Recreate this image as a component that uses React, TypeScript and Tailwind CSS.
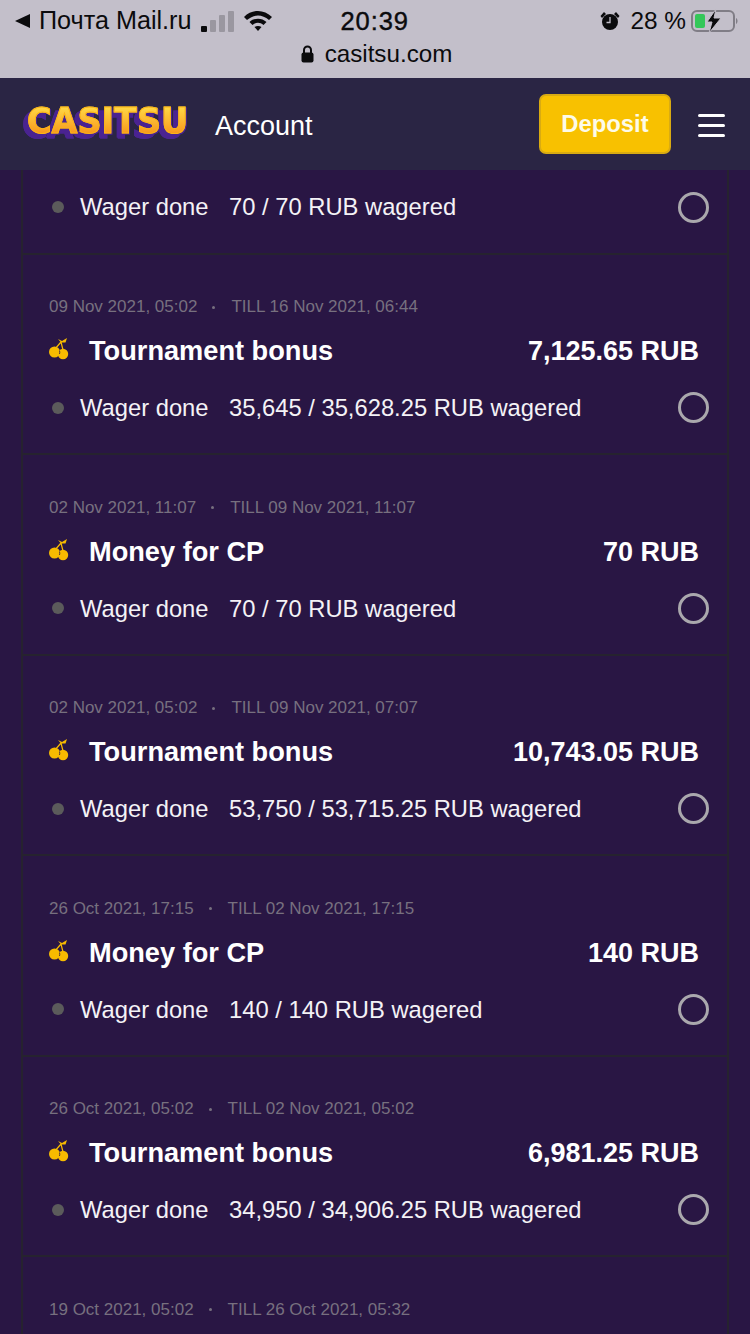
import React from 'react';

type Bonus = {
  from: string;
  till: string;
  title: string;
  amount: string;
  wager: string;
};

const bonuses: Bonus[] = [
  { from: '09 Nov 2021, 05:02', till: 'TILL 16 Nov 2021, 06:44', title: 'Tournament bonus', amount: '7,125.65 RUB', wager: '35,645 / 35,628.25 RUB wagered' },
  { from: '02 Nov 2021, 11:07', till: 'TILL 09 Nov 2021, 11:07', title: 'Money for CP', amount: '70 RUB', wager: '70 / 70 RUB wagered' },
  { from: '02 Nov 2021, 05:02', till: 'TILL 09 Nov 2021, 07:07', title: 'Tournament bonus', amount: '10,743.05 RUB', wager: '53,750 / 53,715.25 RUB wagered' },
  { from: '26 Oct 2021, 17:15', till: 'TILL 02 Nov 2021, 17:15', title: 'Money for CP', amount: '140 RUB', wager: '140 / 140 RUB wagered' },
  { from: '26 Oct 2021, 05:02', till: 'TILL 02 Nov 2021, 05:02', title: 'Tournament bonus', amount: '6,981.25 RUB', wager: '34,950 / 34,906.25 RUB wagered' },
];

function Cherry() {
  return (
    <svg width="20" height="22" viewBox="0 0 20 22" className="-mt-[4px] shrink-0">
      <path d="M9 1 L13 3 L18 0 L16.500 4.500 L12 4.500 Z" fill="#f7bb00" />
      <path d="M12 4 L6 11 M12 4 L14 12" stroke="#f7bb00" strokeWidth="1.200" fill="none" />
      <circle cx="5.500" cy="14" r="5.500" fill="#f7bb00" />
      <circle cx="14" cy="16" r="5.200" fill="#f7bb00" />
      <path d="M10.500 12.500 A5.500 5.500 0 0 1 10.500 16" stroke="#291644" strokeWidth="0.800" fill="none" />
    </svg>
  );
}

function WagerRow({ wager }: { wager: string }) {
  return (
    <div className="flex h-[30px] items-center pl-[29px] pr-[18px]">
      <span className="h-[12px] w-[12px] rounded-full bg-[#5b5b5b]" />
      <span className="ml-[16px] text-[23.75px] text-[#f4f2f6]">Wager done</span>
      <span className="ml-[20.5px] text-[23.75px] text-[#f4f2f6]">{wager}</span>
      <span className="ml-auto h-[31px] w-[31px] rounded-full border-[3px] border-[#aaa8ad]" />
    </div>
  );
}

function DateRow({ from, till }: { from: string; till: string }) {
  return (
    <div className="flex h-[20px] items-center pl-[26px] text-[17px] text-[#77707f]">
      <span>{from}</span>
      <span className="ml-[15px] mr-[16px] h-[3px] w-[3px] rounded-full bg-[#77707f]" />
      <span>{till}</span>
    </div>
  );
}

function BonusCard({ bonus }: { bonus: Bonus }) {
  return (
    <div className="h-[200.5px] border-t-2 border-[#26232f] pt-[42.5px]">
      <DateRow from={bonus.from} till={bonus.till} />
      <div className="mt-[16.3px] flex h-[36px] items-center pl-[26px] pr-[28px] text-white">
        <Cherry />
        <span className="ml-[20px] text-[27.2px] leading-[32px] font-bold">{bonus.title}</span>
        <span className="ml-auto text-[27px] leading-[32px] font-bold">{bonus.amount}</span>
      </div>
      <div className="mt-[23.7px]">
        <WagerRow wager={bonus.wager} />
      </div>
    </div>
  );
}

function StatusBar() {
  return (
    <div className="h-[78px] shrink-0 bg-[#c3bfca] text-[#0b0b0d]">
      <div className="flex h-[42px] items-center pl-[14px] pr-[11px]">
        <svg width="17" height="16" viewBox="0 0 17 16"><path d="M16 1 L16 15 L1 8 Z" fill="#0b0b0d" /></svg>
        <span className="ml-[8px] text-[25.2px]">Почта Mail.ru</span>
        <div className="ml-[9px] flex items-end gap-[3px]">
          <span className="h-[6px] w-[6px] rounded-[1px] bg-[#0b0b0d]" />
          <span className="h-[12px] w-[6px] rounded-[1px] bg-[#9a97a0]" />
          <span className="h-[17px] w-[6px] rounded-[1px] bg-[#9a97a0]" />
          <span className="h-[21px] w-[6px] rounded-[1px] bg-[#9a97a0]" />
        </div>
        <svg className="ml-[9px]" width="30" height="22" viewBox="0 0 30 22">
          <path d="M1 7 C9 -1 21 -1 29 7 L26 10 C19 4 11 4 4 10 Z" fill="#0b0b0d" />
          <path d="M6.500 12 C11 7.500 19 7.500 23.500 12 L20.500 15 C17 12 13 12 9.500 15 Z" fill="#0b0b0d" />
          <path d="M11.500 17 C13.500 15.500 16.500 15.500 18.500 17 L15 21 Z" fill="#0b0b0d" />
        </svg>
        <span className="ml-[68px] text-[25.5px] tracking-[0.9px] [-webkit-text-stroke:0.4px_#0b0b0d]">20:39</span>
        <svg className="ml-auto" width="20" height="20" viewBox="0 0 20 20">
          <circle cx="10" cy="11" r="8" fill="#0b0b0d" />
          <path d="M0.500 5 L4 1 L6 3 L2 7 Z M19.500 5 L16 1 L14 3 L18 7 Z" fill="#0b0b0d" />
          <path d="M10 6 V11.500 H6.500" stroke="#c3bfca" strokeWidth="1.300" fill="none" />
        </svg>
        <span className="ml-[10px] text-[24.4px]">28 %</span>
        <svg className="ml-[5px]" width="48" height="26" viewBox="0 0 48 26">
          <rect x="1" y="3" width="42" height="20" rx="5" fill="none" stroke="#807d86" strokeWidth="2" />
          <rect x="4" y="6" width="10" height="14" rx="2" fill="#34c759" />
          <path d="M45 10 C47 11 47 15 45 16 Z" fill="#807d86" />
          <path d="M16 14 L25 1 L23 10 L30 10 L18 25 L21 14 Z" fill="#0b0b0d" stroke="#c3bfca" strokeWidth="1" />
        </svg>
      </div>
      <div className="flex h-[24px] items-center justify-center gap-[11px] pl-[3px]">
        <svg width="13" height="18" viewBox="0 0 13 18">
          <path d="M3 8 V5 A3.500 3.500 0 0 1 10 5 V8" stroke="#0b0b0d" strokeWidth="2" fill="none" />
          <rect x="0.500" y="7.500" width="12" height="10" rx="2" fill="#0b0b0d" />
        </svg>
        <span className="text-[24.2px]">casitsu.com</span>
      </div>
    </div>
  );
}

function Logo() {
  return (
    <div className="-mt-[6px] w-[164px] pl-[7px] [filter:drop-shadow(-5px_4px_0_#4a2391)_drop-shadow(1px_1px_0_#4a2391)]">
      <span className="inline-block origin-left scale-x-[0.93] whitespace-nowrap bg-linear-to-b from-[#ffe24a] to-[#f58a10] bg-clip-text text-[36px] leading-none font-bold text-transparent [font-family:'DejaVu_Sans',sans-serif] [-webkit-text-stroke:1px_#fbb416]">
        CASITSU
      </span>
    </div>
  );
}

function Header() {
  return (
    <div className="flex h-[92px] shrink-0 items-center bg-[#2a2544] pl-[20px] pr-[25px]">
      <Logo />
      <span className="mt-[4px] ml-[31px] text-[27px] text-white">Account</span>
      <button className="ml-auto flex h-[60px] w-[132px] items-center justify-center rounded-[7px] border-2 border-[#d9ab12] bg-[#f8c100] text-[23.8px] font-bold text-[#fdfbe8]">
        Deposit
      </button>
      <div className="mt-[3px] ml-[27px] flex w-[27px] flex-col gap-[7px]">
        <span className="h-[3px] rounded-full bg-white" />
        <span className="h-[3px] rounded-full bg-white" />
        <span className="h-[3px] rounded-full bg-white" />
      </div>
    </div>
  );
}

export default function App() {
  return (
    <div className="flex h-[1334px] w-[750px] flex-col overflow-hidden bg-[#291644] font-['Liberation_Sans',sans-serif]">
      <StatusBar />
      <Header />
      <div className="mx-[21px] flex-1 border-x-2 border-[#26232f]">
        <div className="h-[82.5px] pt-[22px]">
          <WagerRow wager="70 / 70 RUB wagered" />
        </div>
        {bonuses.map((bonus) => (
          <BonusCard key={bonus.from} bonus={bonus} />
        ))}
        <div className="border-t-2 border-[#26232f] pt-[42.5px]">
          <DateRow from="19 Oct 2021, 05:02" till="TILL 26 Oct 2021, 05:32" />
        </div>
      </div>
    </div>
  );
}
